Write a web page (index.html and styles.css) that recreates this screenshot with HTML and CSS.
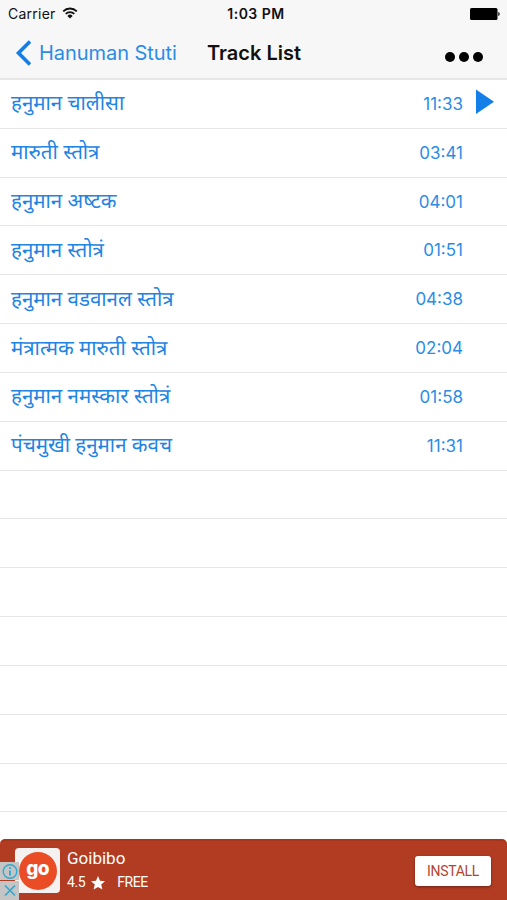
FILE: index.html
```
<!DOCTYPE html>
<html lang="hi">
<head>
  <meta charset="UTF-8" />
  <meta name="viewport" content="width=device-width, initial-scale=1.0"/>
  <title>Track List</title>
  <link rel="stylesheet" href="styles.css">
</head>
<body>

<!-- Header -->
<header class="header">
  <div class="status-bar">
    <div class="carrier">
      <span>Carrier</span>
      <svg class="wifi" viewBox="0 0 16 12" width="16" height="12">
        <path d="M1.2 4.3a9.6 9.6 0 0 1 13.6 0M3.7 6.9a6.1 6.1 0 0 1 8.6 0" fill="none" stroke="#111" stroke-width="1.8"/>
        <path d="M8 11.5L5.4 8.9a3.7 3.7 0 0 1 5.2 0z" fill="#111"/>
      </svg>
    </div>
    <span class="clock">1:03 PM</span>
    <svg class="battery" viewBox="0 0 30 12" width="30" height="12">
      <rect x="0" y="0" width="27.5" height="12" rx="1.5" fill="#000"/>
      <path d="M28.3 4c1.8.5 1.8 3.5 0 4z" fill="#000"/>
    </svg>
  </div>
  <nav class="navbar">
    <a href="#" class="back">
      <svg viewBox="0 0 16 26" width="16" height="26">
        <path d="M15 1.5L3.5 13L15 24.5" fill="none" stroke="#147ee4" stroke-width="3.6"/>
      </svg>
      <span>Hanuman Stuti</span>
    </a>
    <h1>Track List</h1>
    <div class="more"><i></i><i></i><i></i></div>
  </nav>
</header>

<!-- Tracks -->
<ul class="tracks">
  <li><span class="name">हनुमान चालीसा</span><span class="time">11:33</span>
    <svg class="play" viewBox="0 0 18 26" width="18" height="26"><path d="M0 0.5L18 12.7L0 25z" fill="#147ee9"/></svg>
  </li>
  <li><span class="name">मारुती स्तोत्र</span><span class="time">03:41</span></li>
  <li><span class="name">हनुमान अष्&zwj;टक</span><span class="time">04:01</span></li>
  <li><span class="name">हनुमान स्तोत्रं</span><span class="time">01:51</span></li>
  <li><span class="name">हनुमान वडवानल स्तोत्र</span><span class="time">04:38</span></li>
  <li><span class="name">मंत्रात्मक मारुती स्तोत्र</span><span class="time">02:04</span></li>
  <li><span class="name">हनुमान नमस्कार स्तोत्रं</span><span class="time">01:58</span></li>
  <li><span class="name">पंचमुखी हनुमान कवच</span><span class="time">11:31</span></li>
  <li></li>
  <li></li>
  <li></li>
  <li></li>
  <li></li>
  <li></li>
  <li></li>
</ul>

<!-- Ad banner -->
<footer class="ad">
  <div class="ad-logo"><span>go</span></div>
  <div class="ad-text">
    <p class="ad-name">Goibibo</p>
    <p class="ad-info">
      <span>4.5</span>
      <svg viewBox="0 0 14 14" width="14" height="14"><path d="M7 0l2 4.8 5 .4-3.8 3.4 1.2 5L7 10.9l-4.4 2.7 1.2-5L0 5.2l5-.4z" fill="#fff"/></svg>
      <span>FREE</span>
    </p>
  </div>
  <button class="install">INSTALL</button>
  <div class="ad-choices">
    <svg viewBox="0 0 19 18" width="19" height="18">
      <circle cx="10" cy="9.5" r="6.8" fill="none" stroke="#2fa9cf" stroke-width="1.4"/>
      <path d="M10 5.2v1.9M10 8.4v5" stroke="#2fa9cf" stroke-width="1.9"/>
    </svg>
    <svg viewBox="0 0 19 19" width="19" height="19">
      <path d="M5 4.5l10 10M15 4.5l-10 10" stroke="#2fa9cf" stroke-width="1.7"/>
    </svg>
  </div>
</footer>

</body>
</html>
```
FILE: styles.css
```
* {
  margin: 0;
  padding: 0;
  box-sizing: border-box;
}

body {
  display: flex;
  flex-direction: column;
  height: 100vh;
  overflow: hidden;
  background: #fff;
  font-family: Inter, "Liberation Sans", sans-serif;
}

.header {
  height: 80px;
  flex-shrink: 0;
  background: #f7f7f7;
  border-bottom: 2px solid #e6e6e6;
  color: #111;
}

.status-bar {
  display: grid;
  grid-template-columns: 1fr auto 1fr;
  align-items: center;
  height: 27px;
  padding: 0 7px 0 8px;
}

.carrier {
  display: flex;
  align-items: center;
  gap: 6px;
  font-size: 14px;
  letter-spacing: 0.25px;
}

.wifi {
  margin-top: -2px;
}

.clock {
  padding-left: 4px;
  font-size: 14px;
  font-weight: 600;
  letter-spacing: 0.5px;
}

.battery {
  justify-self: end;
}

.navbar {
  display: flex;
  align-items: center;
  height: 51px;
  padding: 0 24px 0 15px;
}

.back {
  display: flex;
  align-items: center;
  gap: 8px;
  width: 192px;
  color: #2b8ce6;
  font-size: 20px;
  letter-spacing: -0.05px;
  text-decoration: none;
  white-space: nowrap;
}

h1 {
  font-size: 20px;
  font-weight: 600;
}

.more {
  display: flex;
  gap: 4px;
  margin: 9px 0 0 auto;
}

.more i {
  width: 10px;
  height: 10px;
  border-radius: 50%;
  background: #000;
}

.tracks {
  flex: 1;
  min-height: 0;
  overflow: hidden;
  list-style: none;
}

.tracks li {
  display: flex;
  align-items: center;
  height: 48.83px;
  padding: 0 13px 0 11px;
  border-bottom: 1px solid #e6e6e6;
  color: #2b8ce6;
}

.name {
  flex: 1;
  padding-top: 3px;
  color: #1f84e2;
  font-family: "Noto Sans Devanagari", "Noto Sans", sans-serif;
  font-size: 20.5px;
}

.time {
  margin-right: 31px;
  font-size: 17px;
}

.play {
  margin: -4px 0 0 -18px;
}

.ad {
  position: relative;
  display: flex;
  align-items: center;
  flex-shrink: 0;
  height: 61px;
  padding: 0 16px 0 15px;
  background: #b23c22;
  border-top: 2px solid #a83519;
  border-radius: 5px 5px 0 0;
  color: #fff;
  font-family: Roboto, sans-serif;
}

.ad-logo {
  display: flex;
  align-items: center;
  justify-content: center;
  width: 45px;
  height: 45px;
  background: #f4f1f0;
  border-radius: 4px;
}

.ad-logo span {
  width: 38px;
  height: 38px;
  border-radius: 50%;
  background: #ea4d25;
  font: 800 19px/34px Inter, sans-serif;
  letter-spacing: -0.8px;
  text-align: center;
}

.ad-text {
  flex: 1;
  padding-left: 7px;
}

.ad-name {
  font-size: 17px;
  line-height: 24px;
}

.ad-info {
  display: flex;
  align-items: center;
  font-size: 14px;
  line-height: 25px;
  letter-spacing: -0.4px;
}

.ad-info svg {
  margin: 0 12px 0 6px;
}

.install {
  width: 76px;
  height: 30px;
  border: none;
  border-radius: 3px;
  background: #fff;
  box-shadow: 0 1px 3px rgba(0, 0, 0, 0.4);
  color: #b5442c;
  font-family: Roboto, sans-serif;
  font-size: 14px;
  letter-spacing: -0.3px;
}

.ad-choices {
  position: absolute;
  left: 0;
  bottom: 0;
  display: flex;
  flex-direction: column;
  gap: 1px;
}

.ad-choices svg {
  display: block;
  background: #c5c5c5;
}
```
